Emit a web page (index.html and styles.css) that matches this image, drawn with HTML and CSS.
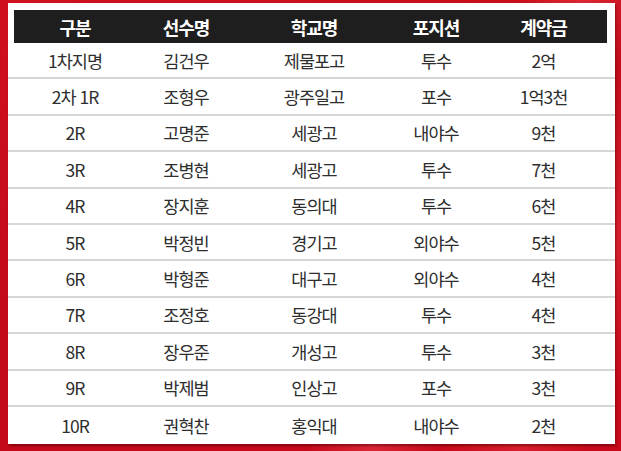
FILE: index.html
```html
<!DOCTYPE html>
<html lang="ko">
<head>
<meta charset="utf-8">
<link rel="stylesheet" href="styles.css">
</head>
<body>
<div class="stage">
  <div class="panel">
    <div class="row head">
      <div>구분</div><div>선수명</div><div>학교명</div><div>포지션</div><div>계약금</div>
    </div>
    <div class="row"><div>1차지명</div><div>김건우</div><div>제물포고</div><div>투수</div><div>2억</div></div>
    <div class="row"><div>2차 1R</div><div>조형우</div><div>광주일고</div><div>포수</div><div>1억3천</div></div>
    <div class="row"><div>2R</div><div>고명준</div><div>세광고</div><div>내야수</div><div>9천</div></div>
    <div class="row"><div>3R</div><div>조병현</div><div>세광고</div><div>투수</div><div>7천</div></div>
    <div class="row"><div>4R</div><div>장지훈</div><div>동의대</div><div>투수</div><div>6천</div></div>
    <div class="row"><div>5R</div><div>박정빈</div><div>경기고</div><div>외야수</div><div>5천</div></div>
    <div class="row"><div>6R</div><div>박형준</div><div>대구고</div><div>외야수</div><div>4천</div></div>
    <div class="row"><div>7R</div><div>조정호</div><div>동강대</div><div>투수</div><div>4천</div></div>
    <div class="row"><div>8R</div><div>장우준</div><div>개성고</div><div>투수</div><div>3천</div></div>
    <div class="row"><div>9R</div><div>박제범</div><div>인상고</div><div>포수</div><div>3천</div></div>
    <div class="row last"><div>10R</div><div>권혁찬</div><div>홍익대</div><div>내야수</div><div>2천</div></div>
  </div>
</div>
</body>
</html>
```

FILE: styles.css
```css
html, body {
  margin: 0;
  padding: 0;
}
body {
  width: 621px;
  height: 451px;
  overflow: hidden;
  font-family: "Noto Sans CJK KR", "Noto Sans", sans-serif;
}
.stage {
  width: 621px;
  height: 451px;
  box-sizing: border-box;
  padding: 3px 6px 0 8px;
  background:
    linear-gradient(115deg, rgba(255,255,255,0) 62%, rgba(255,90,100,0.35) 70%, rgba(255,255,255,0) 78%, rgba(255,80,90,0.3) 88%, rgba(255,255,255,0) 96%),
    linear-gradient(160deg, #d0101f 0%, #c20a19 50%, #c8091a 100%);
}
.panel {
  width: 607px;
  height: 441px;
  box-sizing: border-box;
  background: #ffffff;
  padding: 7px 8px 0 6px;
  box-shadow: 1px 2px 2px rgba(60, 0, 0, 0.45);
}
.row {
  display: grid;
  grid-template-columns: 122px 100px 156px 88px 127px;
  height: 36.4px;
  box-sizing: border-box;
  margin: 0 -8px 0 -6px;
  padding: 0 8px 0 6px;
  border-bottom: 2px solid #d6d6d6;
  color: #2e2e2e;
  font-size: 17.5px;
  font-weight: 400;
  letter-spacing: -1px;
}
.row > div {
  display: flex;
  align-items: center;
  justify-content: center;
}
.row.head {
  height: 33px;
  margin: 0;
  padding: 0;
  border-bottom: none;
  background: #1e1e1e;
  color: #ffffff;
  font-size: 18px;
  font-weight: 700;
  letter-spacing: -1px;
}
.row.last {
  border-bottom: none;
}
```
